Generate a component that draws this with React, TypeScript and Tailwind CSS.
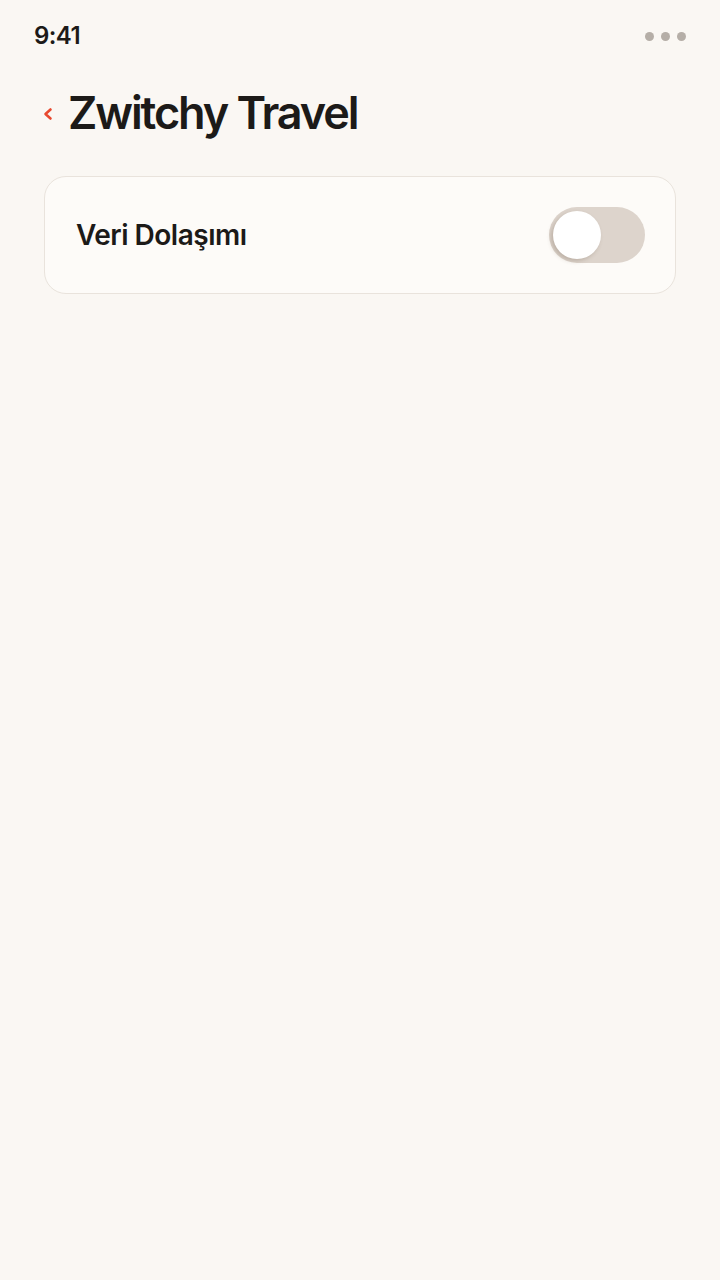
import { useState } from 'react';

const App = () => {
  const [roaming, setRoaming] = useState(false);

  return (
    <div
      className="min-h-screen w-full bg-[#faf7f3] text-[#1c1a18]"
      style={{ fontFamily: 'Inter, "Noto Sans", sans-serif' }}
    >
      {/* Status bar */}
      <div className="flex items-center justify-between pl-[34px] pr-[34px] pt-[22px] h-[50px]">
        <span className="text-[24px] font-semibold tracking-[-0.6px] leading-none">9:41</span>
        <div className="flex items-center gap-[7px]">
          <span className="w-[9px] h-[9px] rounded-full bg-[#b5aea7]" />
          <span className="w-[9px] h-[9px] rounded-full bg-[#b5aea7]" />
          <span className="w-[9px] h-[9px] rounded-full bg-[#b5aea7]" />
        </div>
      </div>

      {/* Header */}
      <div className="flex items-center gap-[14px] pl-[42px] mt-[34px] h-[56px]">
        <button className="text-[#e8492f] mt-[4px]" aria-label="Geri">
          <svg width="12" height="14" viewBox="0 0 12 14" fill="none">
            <path d="M8.5 2.5 L3.5 7 L8.5 11.5" stroke="currentColor" strokeWidth="2.6" strokeLinecap="round" strokeLinejoin="round" />
          </svg>
        </button>
        <h1 className="text-[45px] font-semibold tracking-[-2.1px] leading-none">Zwitchy Travel</h1>
      </div>

      {/* Settings card */}
      <div className="mx-[44px] mt-[36px] rounded-[22px] border border-[#e9e3dc] bg-[#fdfbf8] h-[118px] flex items-center justify-between pl-[31px] pr-[30px]">
        <span className="text-[28px] font-semibold tracking-[-0.5px]">Veri Dolaşımı</span>
        <button
          onClick={() => setRoaming(!roaming)}
          aria-pressed={roaming}
          className={`relative w-[96px] h-[56px] rounded-full transition-colors ${roaming ? 'bg-[#e8492f]' : 'bg-[#ddd4cc]'}`}
        >
          <span
            className={`absolute top-[4px] w-[48px] h-[48px] rounded-full bg-white shadow-[-2px_2px_4px_rgba(90,70,50,0.25)] transition-all ${roaming ? 'left-[44px]' : 'left-[4px]'}`}
          />
        </button>
      </div>
    </div>
  );
};

export default App;
